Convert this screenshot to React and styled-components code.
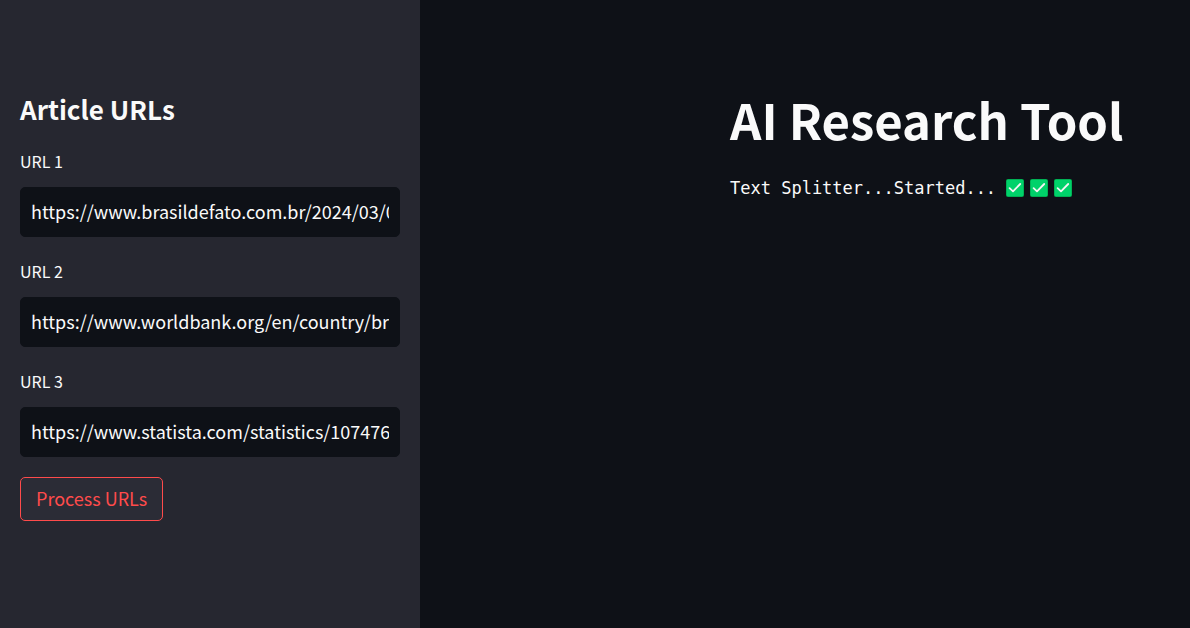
import React from "react";
import styled, { createGlobalStyle } from "styled-components";

const GlobalStyle = createGlobalStyle`
  *, *::before, *::after { box-sizing: border-box; }
  body {
    margin: 0;
    background: #0e1117;
    color: #fafafa;
    font-family: "Noto Sans CJK JP", "Noto Sans", sans-serif;
  }
`;

const Page = styled.div`
  display: flex;
  min-height: 100vh;
`;

const Sidebar = styled.aside`
  flex: 0 0 420px;
  padding: 89px 20px 40px;
  background: #262730;
`;

const SidebarTitle = styled.h2`
  margin: 0 0 20px;
  font-size: 26px;
  font-weight: 600;
  line-height: 40px;
`;

const Form = styled.form`
  display: flex;
  flex-direction: column;
  align-items: flex-start;
  gap: 20px;
`;

const Fields = styled.div`
  display: flex;
  flex-direction: column;
  gap: 22px;
  width: 100%;
`;

const Field = styled.div`
  display: flex;
  flex-direction: column;
  gap: 14px;
`;

const Label = styled.label`
  font-size: 16px;
  line-height: 24px;
`;

const TextInput = styled.input`
  width: 100%;
  height: 50px;
  padding: 0 10px 2px;
  border: 1px solid #0e1117;
  border-radius: 5px;
  background: #0e1117;
  color: #fafafa;
  font: inherit;
  font-size: 18px;
  outline: none;
`;

const Button = styled.button`
  height: 44px;
  padding: 0 15px 2px;
  border: 1px solid #ff4b4b;
  border-radius: 5px;
  background: #2b2c36;
  color: #ff4b4b;
  font: inherit;
  font-size: 18px;
  cursor: pointer;
`;

const Main = styled.main`
  flex: 1;
  padding: 86px 20px 40px 310px;
`;

const Title = styled.h1`
  margin: 0 0 24px;
  font-size: 49px;
  font-weight: 700;
  line-height: 66px;
  white-space: nowrap;
`;

const Status = styled.p`
  display: flex;
  align-items: center;
  margin: 0;
  font-family: "DejaVu Sans Mono", monospace;
  font-size: 17px;
  line-height: 24px;
  white-space: pre;
`;

const Checks = styled.span`
  display: flex;
  gap: 6px;
  margin-left: 10px;
`;

const CheckMark = () => (
  <svg width="18" height="18" viewBox="0 0 18 18" aria-hidden="true">
    <rect width="18" height="18" rx="2" fill="#00a64f" />
    <rect x="0.7" y="0.7" width="16.6" height="16.6" rx="1.4" fill="#00d26a" />
    <path d="M3.6 9.2 7 12.4 14.2 5" fill="none" stroke="#f4f4f4" strokeWidth="1.8" strokeLinecap="round" strokeLinejoin="round" />
  </svg>
);

const urls = [
  "https://www.brasildefato.com.br/2024/03/0",
  "https://www.worldbank.org/en/country/brazil",
  "https://www.statista.com/statistics/107476",
];

export default function App() {
  return (
    <>
      <GlobalStyle />
      <Page>
        <Sidebar>
          <SidebarTitle>Article URLs</SidebarTitle>
          <Form onSubmit={(e) => e.preventDefault()}>
            <Fields>
              {urls.map((url, i) => (
                <Field key={url}>
                  <Label htmlFor={`url-${i + 1}`}>URL {i + 1}</Label>
                  <TextInput id={`url-${i + 1}`} type="text" defaultValue={url} />
                </Field>
              ))}
            </Fields>
            <Button type="submit">Process URLs</Button>
          </Form>
        </Sidebar>
        <Main>
          <Title>AI Research Tool</Title>
          <Status>
            Text Splitter...Started...
            <Checks>
              <CheckMark />
              <CheckMark />
              <CheckMark />
            </Checks>
          </Status>
        </Main>
      </Page>
    </>
  );
}
